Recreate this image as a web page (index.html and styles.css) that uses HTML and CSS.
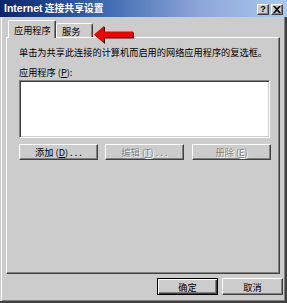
FILE: index.html
```html
<!DOCTYPE html>
<html>
<head>
<meta charset="utf-8">
<link rel="stylesheet" href="styles.css">
</head>
<body>
<div class="win">
  <div class="titlebar">
    <span class="title"><span class="latin">Internet</span> 连接共享设置</span>
    <div class="tbtns">
      <span class="tbtn">?</span>
      <span class="tbtn">
        <svg width="8" height="7" viewBox="0 0 8 7"><path d="M0 0h2l2 2 2-2h2L5 3.5 8 7H6L4 5 2 7H0l3-3.5z" fill="#000"/></svg>
      </span>
    </div>
  </div>
  <div class="body">
    <div class="tabs">
      <div class="tab active">应用程序</div>
      <div class="tab">服务</div>
    </div>
    <div class="panel">
      <p class="desc">单击为共享此连接的计算机而启用的网络应用程序的复选框。</p>
      <p class="label">应用程序 (<u>P</u>):</p>
      <div class="list"></div>
      <div class="row">
        <button class="btn">添加 (<u>D</u>) . . .</button>
        <button class="btn disabled">编辑 (<u>T</u>) . . .</button>
        <button class="btn disabled">册除 (<u>E</u>)</button>
      </div>
    </div>
    <div class="footer">
      <button class="btn def">确定</button>
      <button class="btn">取消</button>
    </div>
  </div>
  <svg class="arrow" width="42" height="18" viewBox="0 0 42 18">
    <path d="M2 9.5 L12 0.5 L12 6.5 L41 6.5 L41 12.5 L12 12.5 L12 18 Z" fill="#3a0000"/>
    <path d="M1 8.5 L11 0 L11 5.5 L40 5.5 L40 11.5 L11 11.5 L11 17 Z" fill="#f00000"/>
  </svg>
</div>
</body>
</html>
```

FILE: styles.css
```css
* { box-sizing: border-box; }
html, body { margin: 0; padding: 0; }
body {
  width: 287px;
  height: 303px;
  background: #cccccc;
  overflow: hidden;
  font-family: "Noto Sans CJK SC", "Liberation Sans", sans-serif;
  font-size: 9.2px;
  color: #000;
}
.win {
  position: relative;
  width: 287px;
  height: 303px;
  background: #cccccc;
  border-right: 2px solid #404040;
  border-bottom: 2px solid #404040;
  box-shadow: inset 1px 0 #cccccc, inset 2px 0 #ffffff, inset -1px -1px #808080;
  display: flex;
  flex-direction: column;
}
.titlebar {
  height: 17px;
  background: linear-gradient(to right, #0a246a 0%, #3a68b0 35%, #8fa6d8 70%, #a6caf0 100%);
  display: flex;
  align-items: center;
  justify-content: space-between;
  padding: 0 1px 0 4px;
  margin-right: -2px;
}
.title {
  color: #fff;
  font-weight: bold;
  font-size: 9.8px;
  white-space: nowrap;
  line-height: 17px;
}
.title .latin {
  font-family: "Liberation Sans", sans-serif;
  font-size: 10.5px;
}
.tbtns {
  display: flex;
  gap: 2px;
  margin-top: 2px;
  margin-right: 3px;
}
.tbtn {
  width: 12px;
  height: 11px;
  background: #cccccc;
  border: 1px solid;
  border-color: #fff #404040 #404040 #fff;
  box-shadow: inset -1px -1px #808080;
  display: flex;
  align-items: center;
  justify-content: center;
  font-family: "Liberation Sans", sans-serif;
  font-weight: bold;
  font-size: 9px;
  line-height: 9px;
  padding-bottom: 1px;
}
.body {
  padding: 3px 5px 0 6px;
  display: flex;
  flex-direction: column;
}
.tabs {
  display: flex;
  align-items: flex-end;
  height: 17px;
  padding-left: 2px;
  position: relative;
  z-index: 2;
}
.tab {
  height: 14px;
  width: 37px;
  border: 1px solid;
  border-bottom: none;
  border-color: #fff #404040 transparent #fff;
  box-shadow: inset -1px 0 #808080;
  border-radius: 2px 2px 0 0;
  display: flex;
  align-items: center;
  padding-left: 5px;
  line-height: 12px;
}
.tab.active {
  width: 48px;
  height: 18px;
  margin-bottom: -1px;
  background: #cccccc;
  padding-left: 5px;
}
.panel {
  width: 274px;
  height: 237px;
  border: 1px solid;
  border-color: #fff #404040 #404040 #fff;
  box-shadow: inset -1px -1px #808080;
  padding: 0 0 0 12px;
  display: flex;
  flex-direction: column;
}
.desc {
  margin: 8px 0 0 0;
  line-height: 12px;
  white-space: nowrap;
}
.label {
  margin: 8px 0 0 0;
  line-height: 12px;
}
u { text-decoration: underline; }
.list {
  margin-top: 2px;
  width: 251px;
  height: 58px;
  background: #fff;
  border: 1px solid;
  border-color: #808080 #fff #fff #808080;
  box-shadow: inset 1px 1px #404040, inset -1px -1px #cccccc;
}
.row {
  display: flex;
  gap: 7px;
  margin-top: 6px;
}
.btn {
  width: 79px;
  height: 16px;
  padding: 0;
  margin: 0;
  background: #cccccc;
  border: 1px solid;
  border-color: #fff #404040 #404040 #fff;
  box-shadow: inset -1px -1px #808080;
  font-family: "Noto Sans CJK SC", "Liberation Sans", sans-serif;
  font-size: 9.2px;
  line-height: 12px;
  color: #000;
  white-space: nowrap;
}
.btn.disabled {
  color: #808080;
  text-shadow: 1px 1px #fff;
}
.row .btn:nth-child(3) { margin-left: 1px; }
.footer {
  display: flex;
  justify-content: flex-end;
  gap: 4px;
  margin-top: 4px;
  margin-right: -3px;
}
.footer .btn {
  width: 61px;
  height: 17px;
}
.footer .btn.def {
  border-color: #000;
  box-shadow: inset 1px 1px #fff, inset -1px -1px #404040, inset -2px -2px #808080;
}
.arrow {
  position: absolute;
  left: 93px;
  top: 26px;
}
```
